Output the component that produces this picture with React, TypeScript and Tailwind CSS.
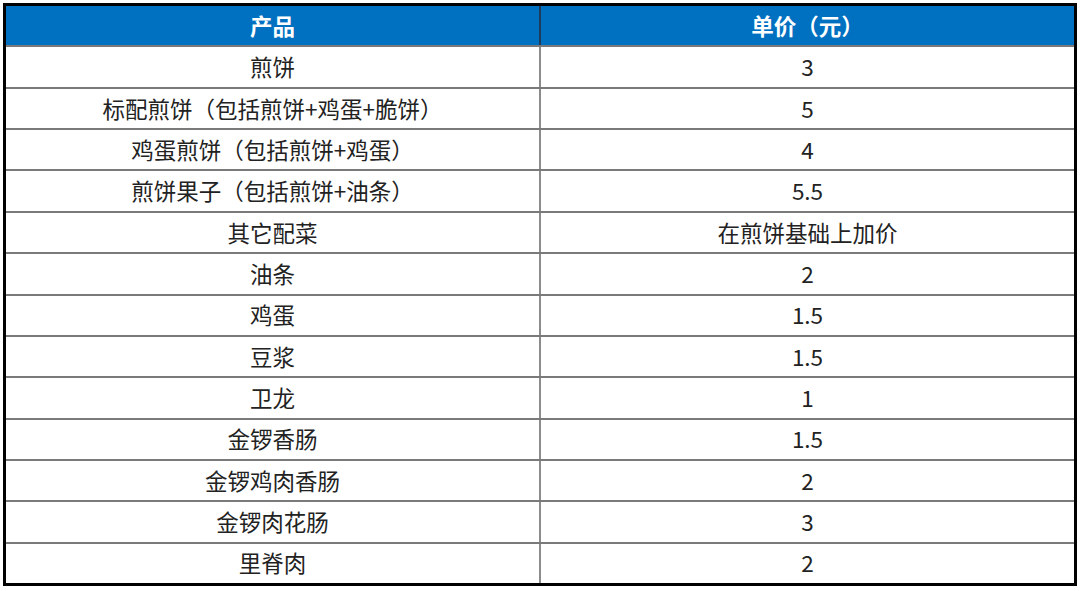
const rows: [string, string][] = [
  ["煎饼", "3"],
  ["标配煎饼（包括煎饼+鸡蛋+脆饼）", "5"],
  ["鸡蛋煎饼（包括煎饼+鸡蛋）", "4"],
  ["煎饼果子（包括煎饼+油条）", "5.5"],
  ["其它配菜", "在煎饼基础上加价"],
  ["油条", "2"],
  ["鸡蛋", "1.5"],
  ["豆浆", "1.5"],
  ["卫龙", "1"],
  ["金锣香肠", "1.5"],
  ["金锣鸡肉香肠", "2"],
  ["金锣肉花肠", "3"],
  ["里脊肉", "2"],
];

export default function App() {
  return (
    <div className="w-[1080px] h-[591px] bg-white p-[3px]" style={{ fontFamily: '"Noto Sans CJK SC", sans-serif' }}>
      <div className="flex h-[583px] w-[1074px] flex-col border-[3px] border-black">
        <div className="flex flex-1 bg-[#0070c0] text-[22.5px] font-semibold text-white">
          <div className="flex w-[533px] items-center justify-center">产品</div>
          <div className="flex flex-1 items-center justify-center border-l-2 border-[#1f3b5a]">单价（元）</div>
        </div>
        {rows.map(([name, price]) => (
          <div key={name} className="flex flex-1 border-t-2 border-[#7a7a7a] text-[22.5px] text-[#222]">
            <div className="flex w-[533px] items-center justify-center">{name}</div>
            <div className="flex flex-1 items-center justify-center border-l-2 border-[#8c8c8c]">{price}</div>
          </div>
        ))}
      </div>
    </div>
  );
}
